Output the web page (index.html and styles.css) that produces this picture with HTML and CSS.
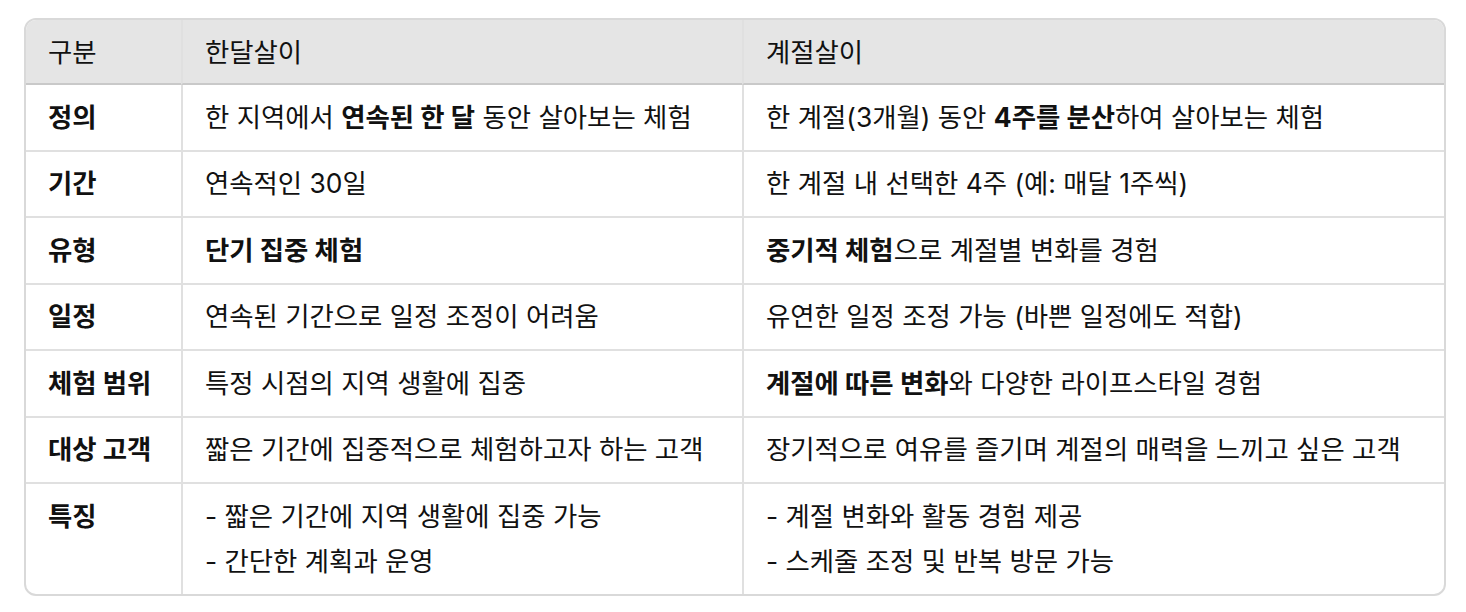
FILE: index.html
```html
<!DOCTYPE html>
<html lang="ko">
<head>
<meta charset="utf-8">
<link rel="stylesheet" href="styles.css">
</head>
<body>
<div class="wrap">
<table class="cmp">
  <colgroup>
    <col class="c1"><col class="c2"><col class="c3">
  </colgroup>
  <thead>
    <tr><th>구분</th><th>한달살이</th><th>계절살이</th></tr>
  </thead>
  <tbody>
    <tr><td class="lbl">정의</td><td>한 지역에서 <b>연속된 한 달</b> 동안 살아보는 체험</td><td>한 계절(3개월) 동안 <b>4주를 분산</b>하여 살아보는 체험</td></tr>
    <tr><td class="lbl">기간</td><td>연속적인 30일</td><td>한 계절 내 선택한 4주 (예: 매달 1주씩)</td></tr>
    <tr><td class="lbl">유형</td><td><b>단기 집중 체험</b></td><td><b>중기적 체험</b>으로 계절별 변화를 경험</td></tr>
    <tr><td class="lbl">일정</td><td>연속된 기간으로 일정 조정이 어려움</td><td>유연한 일정 조정 가능 (바쁜 일정에도 적합)</td></tr>
    <tr><td class="lbl">체험 범위</td><td>특정 시점의 지역 생활에 집중</td><td><b>계절에 따른 변화</b>와 다양한 라이프스타일 경험</td></tr>
    <tr><td class="lbl">대상 고객</td><td>짧은 기간에 집중적으로 체험하고자 하는 고객</td><td>장기적으로 여유를 즐기며 계절의 매력을 느끼고 싶은 고객</td></tr>
    <tr><td class="lbl">특징</td><td>- 짧은 기간에 지역 생활에 집중 가능<br>- 간단한 계획과 운영</td><td>- 계절 변화와 활동 경험 제공<br>- 스케줄 조정 및 반복 방문 가능</td></tr>
  </tbody>
</table>
</div>
</body>
</html>
```
FILE: styles.css
```css
html, body {
  margin: 0;
  padding: 0;
  background: #ffffff;
}
body {
  font-family: "Inter", "Noto Sans CJK KR", sans-serif;
  color: #111111;
}
.wrap {
  padding: 18px 20px 0 24px;
}
.cmp {
  width: 100%;
  table-layout: fixed;
  border-collapse: separate;
  border-spacing: 0;
  border: 2px solid #d9d9d9;
  border-radius: 12px;
  overflow: hidden;
  font-size: 26.4px;
}
.c1 { width: 155px; }
.c2 { width: 561px; }
.cmp th, .cmp td {
  text-align: left;
  vertical-align: top;
  padding: 9.75px 22px;
  line-height: 45px;
  white-space: nowrap;
}
.cmp th {
  background: #e5e5e5;
  font-weight: 400;
  padding-top: 9.5px;
  padding-bottom: 9.5px;
  line-height: 44px;
  border-bottom: 2px solid #c9c9c9;
}
.cmp td {
  border-top: 2px solid #e0e0e0;
}
.cmp tbody tr:first-child td {
  border-top: none;
}
.cmp th + th, .cmp td + td {
  border-left: 2px solid #e0e0e0;
}
.cmp b, .cmp .lbl {
  font-weight: 700;
}
```
